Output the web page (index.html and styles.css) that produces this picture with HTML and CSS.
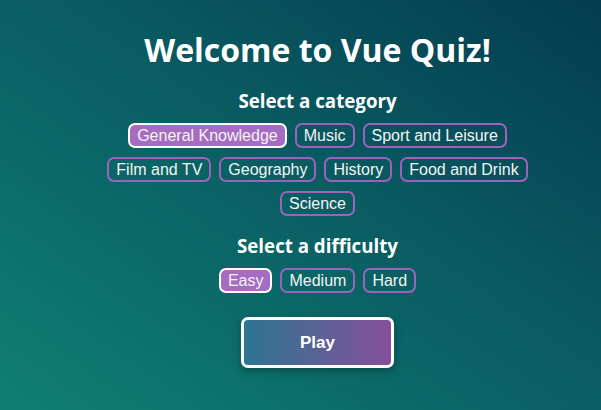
FILE: index.html
```html
<!DOCTYPE html>
<html>
<head>
<meta charset="utf-8">
<link rel="stylesheet" href="styles.css">
</head>
<body>
<main class="quiz">
  <h1 class="title">Welcome to Vue Quiz!</h1>
  <section class="group">
    <h2 class="group-title">Select a category</h2>
    <div class="options">
      <button class="opt selected">General Knowledge</button>
      <button class="opt">Music</button>
      <button class="opt">Sport and Leisure</button>
      <button class="opt">Film and TV</button>
      <button class="opt">Geography</button>
      <button class="opt">History</button>
      <button class="opt">Food and Drink</button>
      <button class="opt">Science</button>
    </div>
  </section>
  <section class="group">
    <h2 class="group-title">Select a difficulty</h2>
    <div class="options">
      <button class="opt selected">Easy</button>
      <button class="opt">Medium</button>
      <button class="opt">Hard</button>
    </div>
  </section>
  <button class="play">Play</button>
</main>
</body>
</html>
```
FILE: styles.css
```css
html, body {
  margin: 0;
  height: 100%;
}
body {
  background: linear-gradient(to top right, #0f7f74 0%, #0a5f63 50%, #043c50 100%);
  color: #fff;
  font-family: "Liberation Sans", Arial, sans-serif;
}
.quiz {
  display: flex;
  flex-direction: column;
  align-items: center;
  padding: 28px 0 0 34px;
  box-sizing: border-box;
}
.title {
  font-family: "Open Sans", sans-serif;
  font-weight: 700;
  font-size: 32px;
  margin: 0 0 17px;
  line-height: 44px;
}
.group {
  display: flex;
  flex-direction: column;
  align-items: center;
  width: 440px;
  margin-bottom: 18px;
}
.group-title {
  font-family: "Open Sans", sans-serif;
  font-weight: 700;
  font-size: 18.72px;
  line-height: 24px;
  margin: 0 0 10px;
}
.options {
  display: flex;
  flex-wrap: wrap;
  justify-content: center;
  gap: 9px 8px;
}
.opt {
  font-family: "Liberation Sans", Arial, sans-serif;
  font-size: 16px;
  color: #f4f4f4;
  background: transparent;
  border: 2px solid #9d62bd;
  border-radius: 7px;
  padding: 0 7px;
  height: 25px;
  line-height: 21px;
}
.opt.selected {
  background: #a66cc2;
  border-color: #fff;
}
.play {
  margin-top: 6px;
  width: 153px;
  height: 51px;
  border: 3px solid #fff;
  border-radius: 7px;
  background: linear-gradient(to right, #2d7590, #864f9b);
  color: #fff;
  font-family: "Liberation Sans", Arial, sans-serif;
  font-weight: 700;
  font-size: 17px;
  box-shadow: 0 3px 8px rgba(0, 0, 0, 0.3);
}
```
